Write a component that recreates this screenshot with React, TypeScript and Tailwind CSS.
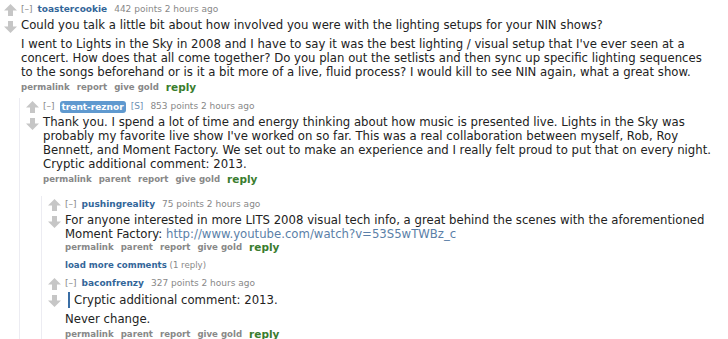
import React from 'react';

type Props = {
  author: string;
  flair?: boolean;
  points: string;
  buttons: string[];
  children?: React.ReactNode;
  replies?: React.ReactNode;
};

function Arrow({ down }: { down?: boolean }) {
  return (
    <svg width="13" height="12" viewBox="0 0 13 12" className={down ? 'rotate-180' : ''}>
      <path d="M6.5 0 L13 6.5 L9 6.5 L9 12 L4 12 L4 6.5 L0 6.5 Z" fill="#c6c6c6" />
    </svg>
  );
}

function Comment({ author, flair, points, buttons, children, replies }: Props) {
  return (
    <div className="flex">
      <div className="flex w-[17px] shrink-0 flex-col gap-[5px] pt-[3px]">
        <Arrow />
        <Arrow down />
      </div>
      <div className="min-w-0 flex-1">
        <div className="flex items-center gap-[5px] whitespace-nowrap text-[9px] leading-[17px] text-[#888]">
          <span>[–]</span>
          {flair ? (
            <span className="rounded-[3px] bg-[#5f99cf] px-[2px] font-bold leading-[12px] text-white">{author}</span>
          ) : (
            <span className="font-bold text-[#369]">{author}</span>
          )}
          {flair && <span className="text-[#6c8fb3]">[S]</span>}
          <span className="ml-[2px]">{points} points 2 hours ago</span>
        </div>
        <div className="whitespace-nowrap text-[11.7px] leading-[14px] text-[#222]">{children}</div>
        <div className="flex items-center gap-[7px] whitespace-nowrap text-[8.6px] font-bold leading-[16px] text-[#888]">
          {buttons.map((b) => (
            <span key={b}>{b}</span>
          ))}
          <span className="text-[10.5px] text-[#3a7d2e]">reply</span>
        </div>
        {replies}
      </div>
    </div>
  );
}

export default function App() {
  return (
    <div className="h-[339px] w-[728px] overflow-hidden bg-white pl-[4px] pt-[1px] font-['Verdana','DejaVu_Sans',sans-serif]">
      <Comment
        author="toastercookie"
        points="442"
        buttons={['permalink', 'report', 'give gold']}
        replies={
          <div className="-ml-[2px] mt-[3px] border-l border-[#ececf2] pl-[6px]">
            <Comment
              author="trent-reznor"
              flair
              points="853"
              buttons={['permalink', 'parent', 'report', 'give gold']}
              replies={
                <div className="-ml-[2px] mt-[9px] border-l border-[#ececf2] pl-[6px]">
                  <Comment
                    author="pushingreality"
                    points="75"
                    buttons={['permalink', 'parent', 'report', 'give gold']}
                  >
                    <p className="-mb-[2px]">
                      For anyone interested in more LITS 2008 visual tech info, a great behind the scenes with the aforementioned
                      <br />
                      Moment Factory: <span className="text-[#5b7fa8]">http://www.youtube.com/watch?v=53S5wTWBz_c</span>
                    </p>
                  </Comment>
                  <div className="mb-[2px] ml-[17px] mt-[2px] text-[8.6px] leading-[16px] text-[#888]">
                    <span className="font-bold text-[#369]">load more comments</span> (1 reply)
                  </div>
                  <Comment
                    author="baconfrenzy"
                    points="327"
                    buttons={['permalink', 'parent', 'report', 'give gold']}
                  >
                    <p className="ml-[3px] border-l-2 border-[#3a6ea5] pl-[4px] leading-[16px]">Cryptic additional comment: 2013.</p>
                    <p className="mt-[4px]">Never change.</p>
                  </Comment>
                </div>
              }
            >
              <p>
                Thank you. I spend a lot of time and energy thinking about how music is presented live. Lights in the Sky was
                <br />
                probably my favorite live show I've worked on so far. This was a real collaboration between myself, Rob, Roy
                <br />
                Bennett, and Moment Factory. We set out to make an experience and I really felt proud to put that on every night.
                <br />
                Cryptic additional comment: 2013.
              </p>
            </Comment>
          </div>
        }
      >
        <p>Could you talk a little bit about how involved you were with the lighting setups for your NIN shows?</p>
        <p className="mt-[5px]">
          I went to Lights in the Sky in 2008 and I have to say it was the best lighting / visual setup that I've ever seen at a
          <br />
          concert. How does that all come together? Do you plan out the setlists and then sync up specific lighting sequences
          <br />
          to the songs beforehand or is it a bit more of a live, fluid process? I would kill to see NIN again, what a great show.
        </p>
      </Comment>
    </div>
  );
}
